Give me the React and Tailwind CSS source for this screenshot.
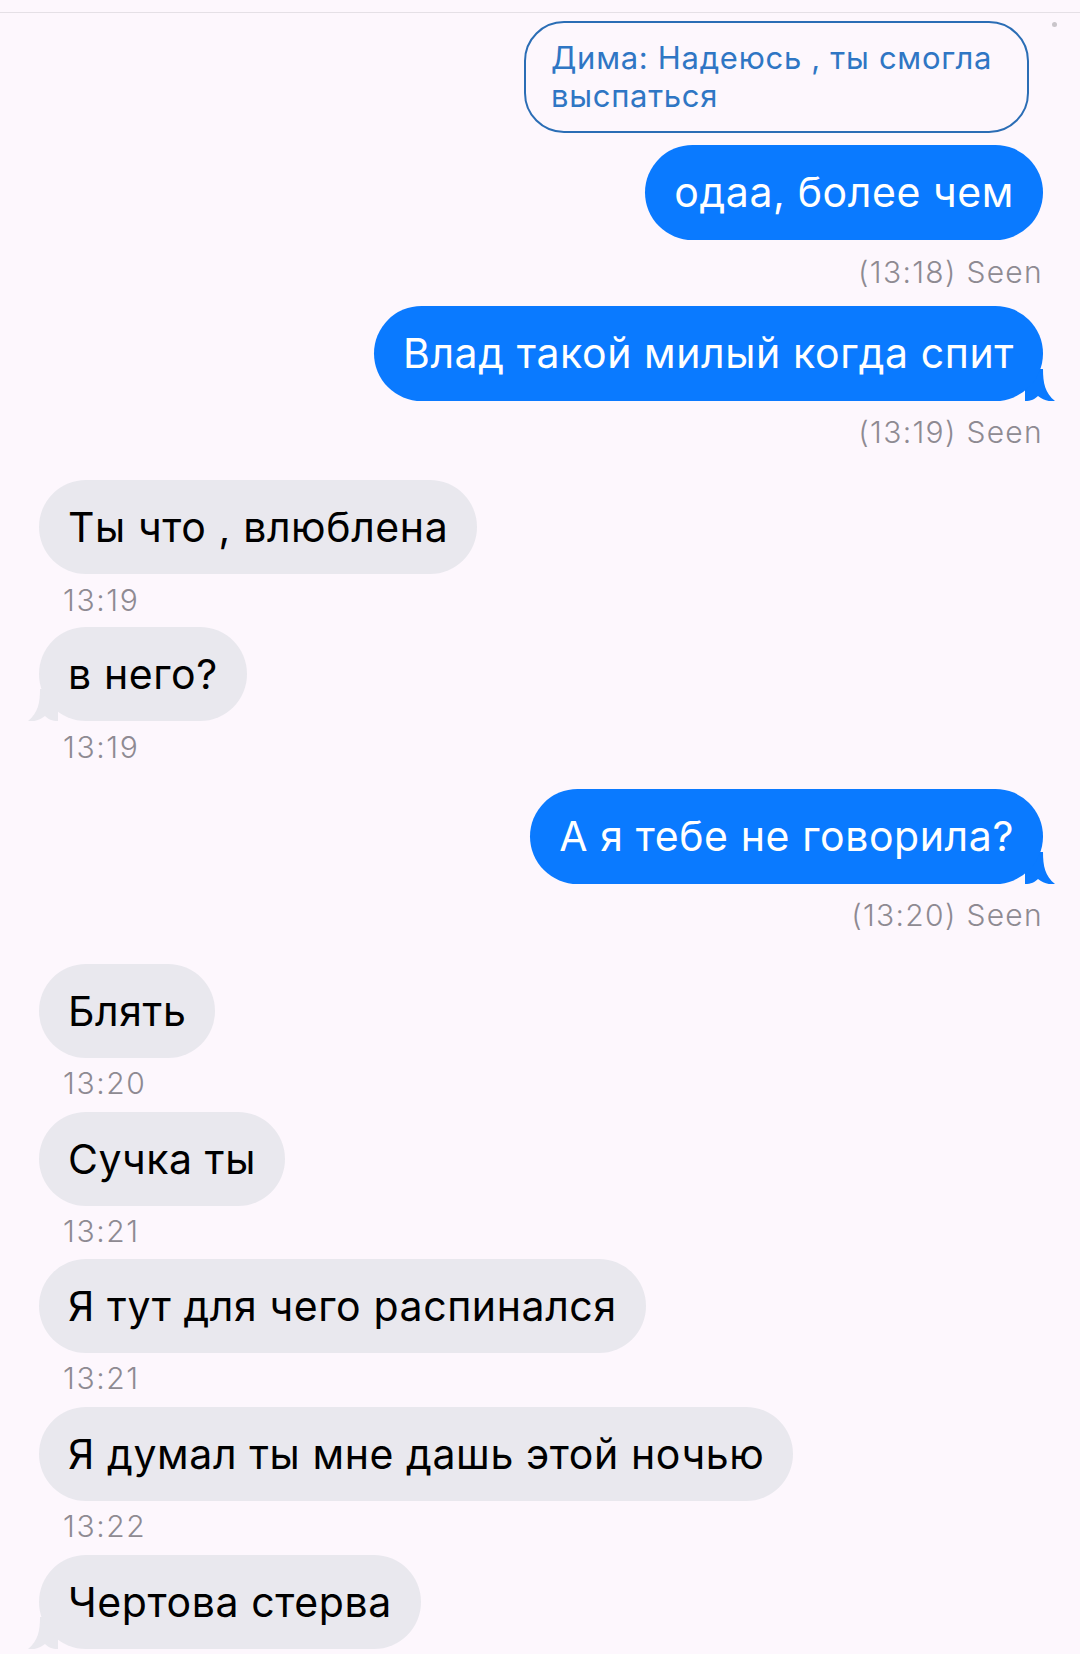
import React from "react";

const FONT = { fontFamily: "Inter, 'Noto Sans', sans-serif" };

function TailRight() {
  return (
    <svg
      className="absolute bottom-0 right-[-12px]"
      width="30"
      height="32"
      viewBox="0 0 30 32"
    >
      <path
        d="M0 0 H18 C18 14 20 24 30 32 C24 33 18 31 13 27 C10 30 6 32 0 32 Z"
        fill="#0a7aff"
      />
    </svg>
  );
}

function TailLeft() {
  return (
    <svg
      className="absolute bottom-0 left-[-11px]"
      width="30"
      height="32"
      viewBox="0 0 30 32"
    >
      <path
        d="M30 0 H12 C12 14 10 24 0 32 C6 33 12 31 17 27 C20 30 24 32 30 32 Z"
        fill="#e9e8ee"
      />
    </svg>
  );
}

function Outgoing({ text, tail, className = "" }) {
  return (
    <div className={`flex justify-end ${className}`}>
      <div className="relative">
        {tail && <TailRight />}
        <div className="relative flex h-[95px] items-center rounded-[48px] bg-[#0a7aff] px-[29px] text-[41px] leading-none tracking-[0.6px] text-white">
          {text}
        </div>
      </div>
    </div>
  );
}

function Incoming({ text, tail, className = "" }) {
  return (
    <div className={`flex justify-start ${className}`}>
      <div className="relative">
        {tail && <TailLeft />}
        <div className="relative flex h-[94px] items-center rounded-[47px] bg-[#e9e8ee] px-[29px] text-[41px] leading-none tracking-[0.6px] text-black">
          {text}
        </div>
      </div>
    </div>
  );
}

function Seen({ time, className = "" }) {
  return (
    <div
      className={`flex h-[32px] items-center justify-end text-[30px] font-light leading-none tracking-[1.3px] text-[#8e8a92] ${className}`}
    >
      ({time}) Seen
    </div>
  );
}

function Stamp({ time, className = "" }) {
  return (
    <div
      className={`flex h-[32px] items-center pl-[24px] text-[30px] font-light leading-none tracking-[1.6px] text-[#8e8a92] ${className}`}
    >
      {time}
    </div>
  );
}

export default function App() {
  return (
    <div
      className="relative h-[1654px] w-[1080px] overflow-hidden bg-[#fdf7fd]"
      style={FONT}
    >
      <div className="mt-[12px] h-px w-full bg-[#e5e0e6]" />
      <div className="absolute right-[23px] top-[22px] h-[5px] w-[5px] rounded-full bg-[#c9c5ca]" />

      <div className="flex flex-col pl-[39px] pr-[37px]">
        {/* quoted notification */}
        <div className="mt-[8px] flex justify-end pr-[14px]">
          <div className="w-[505px] rounded-[40px] border-2 border-[#2a6db5] px-[25px] py-[16px] text-[31px] leading-[38px] tracking-[0.7px] text-[#2f76c4]">
            Дима: Надеюсь , ты смогла
            <br />
            выспаться
          </div>
        </div>

        <Outgoing text="одаа, более чем" className="mt-[12px]" />
        <Seen time="13:18" className="mt-[16px]" />

        <Outgoing text="Влад такой милый когда спит" tail className="mt-[18px]" />
        <Seen time="13:19" className="mt-[15px]" />

        <Incoming text="Ты что , влюблена" className="mt-[32px]" />
        <Stamp time="13:19" className="mt-[10px]" />

        <Incoming text="в него?" tail className="mt-[11px]" />
        <Stamp time="13:19" className="mt-[10px]" />

        <Outgoing text="А я тебе не говорила?" tail className="mt-[26px]" />
        <Seen time="13:20" className="mt-[15px]" />

        <Incoming text="Блять" className="mt-[33px]" />
        <Stamp time="13:20" className="mt-[9px]" />

        <Incoming text="Сучка ты" className="mt-[13px]" />
        <Stamp time="13:21" className="mt-[9px]" />

        <Incoming text="Я тут для чего распинался" className="mt-[12px]" />
        <Stamp time="13:21" className="mt-[9px]" />

        <Incoming text="Я думал ты мне дашь этой ночью" className="mt-[13px]" />
        <Stamp time="13:22" className="mt-[9px]" />

        <Incoming text="Чертова стерва" tail className="mt-[13px]" />
      </div>
    </div>
  );
}
